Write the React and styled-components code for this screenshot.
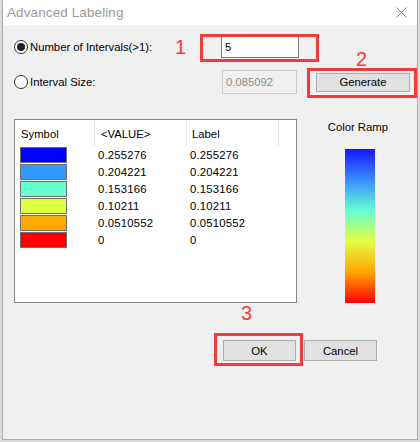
import React from 'react';
import styled, { createGlobalStyle } from 'styled-components';

const GlobalStyle = createGlobalStyle`
  html, body {
    margin: 0;
    padding: 0;
    background: #dcdcdc;
  }
  body {
    font-family: "Liberation Sans", Arial, sans-serif;
    font-size: 11px;
    color: #000;
  }
`;

const Window = styled.div`
  position: relative;
  width: 414px;
  height: 439px;
  margin-left: 2px;
  background: #f0f0f0;
  border: 1px solid #a9a9a9;
  border-top: none;
  display: flex;
  flex-direction: column;
`;

const TitleBar = styled.div`
  height: 25px;
  flex: none;
  background: #fff;
  display: flex;
  align-items: center;
  justify-content: space-between;
  padding: 0 10px 0 4px;
`;

const Title = styled.span`
  font-size: 13.5px;
  color: #9a9a9a;
  letter-spacing: 0.1px;
  padding-bottom: 1px;
`;

const Body = styled.div`
  flex: 1;
  padding: 11px 0 0 11px;
  display: flex;
  flex-direction: column;
`;

const OptionRow = styled.div`
  display: flex;
  align-items: center;
  height: ${(p) => p.h}px;
  margin-top: ${(p) => p.mt || 0}px;
`;

const RadioLabel = styled.label`
  display: flex;
  align-items: center;
  width: ${(p) => p.w}px;
  font-size: 11.3px;
`;

const Radio = styled.span`
  width: 12px;
  height: 12px;
  border-radius: 50%;
  border: 1px solid #333;
  background: #fff;
  margin-right: 2px;
  display: flex;
  align-items: center;
  justify-content: center;

  &::after {
    content: '';
    width: 8px;
    height: 8px;
    border-radius: 50%;
    background: ${(p) => (p.checked ? '#222' : 'transparent')};
  }
`;

const TextBox = styled.div`
  width: ${(p) => p.w}px;
  height: ${(p) => p.h}px;
  box-sizing: border-box;
  background: ${(p) => (p.disabled ? '#f0f0f0' : '#fff')};
  border: 1px solid ${(p) => (p.disabled ? '#cccccc' : '#7a7a7a')};
  color: ${(p) => (p.disabled ? '#8a8a8a' : '#000')};
  display: flex;
  align-items: center;
  padding-left: 3px;
  font-size: 11.3px;
`;

const Button = styled.button`
  width: ${(p) => p.w}px;
  height: ${(p) => p.h}px;
  margin-left: ${(p) => p.ml || 0}px;
  background: #e1e1e1;
  border: 1px solid #adadad;
  font-family: inherit;
  font-size: 11.3px;
  color: #000;
  padding: 0;
`;

const Middle = styled.div`
  display: flex;
  margin-top: 25px;
`;

const ListBox = styled.div`
  width: 285px;
  height: 182px;
  background: #fff;
  border: 1px solid #828790;
`;

const HeaderRow = styled.div`
  display: grid;
  grid-template-columns: 80px 92px 92px;
  height: 25px;
  padding-top: 1px;
`;

const HeaderCell = styled.div`
  display: flex;
  align-items: center;
  padding-left: ${(p) => p.pl}px;
  border-right: 1px solid #e5e5e5;
  font-size: 11.3px;
`;

const DataRow = styled.div`
  display: grid;
  grid-template-columns: 80px 92px 92px;
  height: 17px;
  align-items: center;
`;

const Swatch = styled.div`
  width: 45px;
  height: 14px;
  margin-left: 5px;
  border: 1px solid #6e6e6e;
  background: ${(p) => p.color};
`;

const Cell = styled.div`
  padding-left: 3px;
  font-size: 11.3px;
  letter-spacing: 0.2px;
`;

const RampColumn = styled.div`
  width: 116px;
  display: flex;
  flex-direction: column;
  align-items: center;
  padding-left: 6px;
`;

const RampTitle = styled.div`
  margin-top: 2px;
  font-size: 11.3px;
  height: 14px;
  margin-right: 4px;
`;

const Ramp = styled.div`
  width: 30px;
  height: 154px;
  margin-top: 14px;
  background: linear-gradient(
    to bottom,
    #1414ff 0%,
    #3a8cff 20%,
    #66ffd0 40%,
    #e4ff44 60%,
    #ffa500 80%,
    #ff0000 100%
  );
`;

const Footer = styled.div`
  display: flex;
  justify-content: flex-end;
  padding-right: 40px;
  margin-top: 37px;
  gap: 8px;
`;

const Mark = styled.div`
  position: absolute;
  left: ${(p) => p.x}px;
  top: ${(p) => p.y}px;
  width: ${(p) => p.w}px;
  height: ${(p) => p.h}px;
  box-sizing: border-box;
  border: 3px solid #f23b3b;
  pointer-events: none;
`;

const Num = styled.div`
  position: absolute;
  left: ${(p) => p.x}px;
  top: ${(p) => p.y}px;
  color: #f23b3b;
  font-family: "Liberation Sans", Arial, sans-serif;
  font-size: 20px;
  line-height: 20px;
`;

const CloseIcon = () => (
  <svg width="11" height="11" viewBox="0 0 11 11">
    <path d="M0.5 0.5 L10.5 10.5 M10.5 0.5 L0.5 10.5" stroke="#8a8a8a" strokeWidth="1" />
  </svg>
);

const rows = [
  { color: '#0000ff', value: '0.255276' },
  { color: '#3399ff', value: '0.204221' },
  { color: '#66ffcc', value: '0.153166' },
  { color: '#ddff44', value: '0.10211' },
  { color: '#ffaa00', value: '0.0510552' },
  { color: '#ff0000', value: '0' },
];

export default function App() {
  return (
    <>
      <GlobalStyle />
      <Window>
        <TitleBar>
          <Title>Advanced Labeling</Title>
          <CloseIcon />
        </TitleBar>
        <Body>
          <OptionRow h={22}>
            <RadioLabel w={207}>
              <Radio checked />
              Number of Intervals(&gt;1):
            </RadioLabel>
            <TextBox w={78} h={22}>5</TextBox>
          </OptionRow>
          <OptionRow h={24} mt={12}>
            <RadioLabel w={208}>
              <Radio />
              Interval Size:
            </RadioLabel>
            <TextBox w={75} h={24} disabled>0.085092</TextBox>
            <Button w={94} h={19} ml={19}>Generate</Button>
          </OptionRow>

          <Middle>
            <ListBox>
              <HeaderRow>
                <HeaderCell pl={6}>Symbol</HeaderCell>
                <HeaderCell pl={6}>&lt;VALUE&gt;</HeaderCell>
                <HeaderCell pl={5}>Label</HeaderCell>
              </HeaderRow>
              {rows.map((r) => (
                <DataRow key={r.value}>
                  <Swatch color={r.color} />
                  <Cell>{r.value}</Cell>
                  <Cell>{r.value}</Cell>
                </DataRow>
              ))}
            </ListBox>
            <RampColumn>
              <RampTitle>Color Ramp</RampTitle>
              <Ramp />
            </RampColumn>
          </Middle>

          <Footer>
            <Button w={73} h={21}>OK</Button>
            <Button w={73} h={21}>Cancel</Button>
          </Footer>
        </Body>

        <Mark x={197} y={34} w={119} h={28} />
        <Num x={172} y={37}>1</Num>
        <Mark x={304} y={68} w={110} h={30} />
        <Num x={353} y={49}>2</Num>
        <Mark x={211} y={333} w={89} h={33} />
        <Num x={238} y={303}>3</Num>
      </Window>
    </>
  );
}
